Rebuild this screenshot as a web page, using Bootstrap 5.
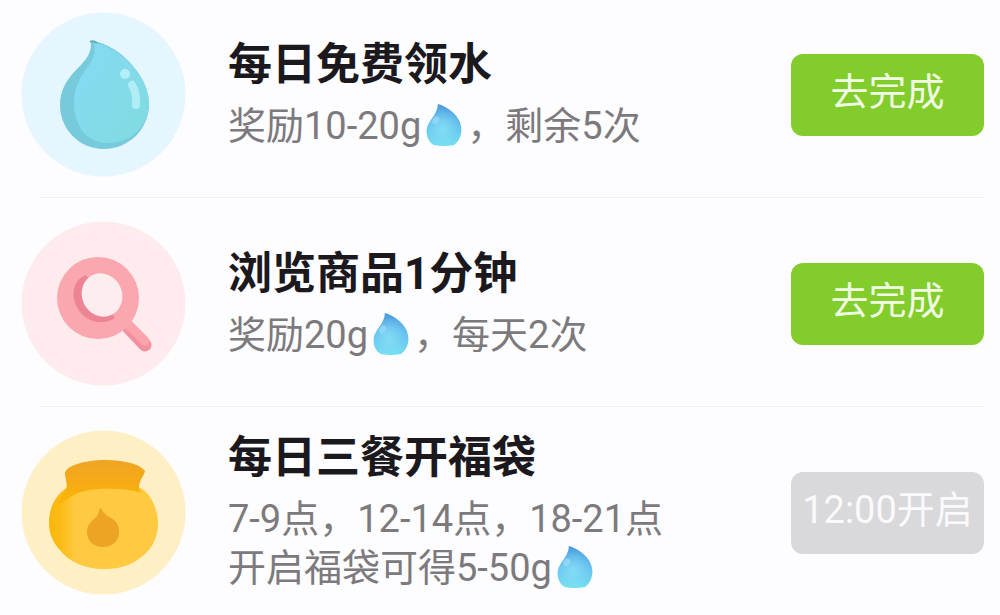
<!DOCTYPE html>
<html lang="zh-CN">
<head>
<meta charset="utf-8">
<meta name="viewport" content="width=device-width, initial-scale=1">
<title>每日任务</title>
<link href="https://cdn.jsdelivr.net/npm/bootstrap@5.3.0/dist/css/bootstrap.min.css" rel="stylesheet">
<style>
  body { background: #fdfcfe; font-family: Roboto, "Noto Sans CJK SC", sans-serif; }
  .task { padding: 23px 16px 21px 21px; }
  .task:first-child { padding-top: 12px; }
  .task:last-child { padding-top: 20px; padding-bottom: 12px; }
  .task + .task::before { content: ""; position: absolute; top: -1px; left: 40px; right: 16px; height: 1px; background: #f2eff2; }
  .task-icon { width: 165px; height: 165px; }
  .task-text { margin-left: 42px; padding-bottom: 5px; }
  .task-title { font-size: 44px; line-height: 62px; font-weight: 700; color: #1b191d; margin-bottom: 6px; }
  .task-info { font-size: 38px; line-height: 49px; color: #7c7a7d; }
  .drop { width: 38px; height: 43px; margin: 0 4px; vertical-align: -7px; }
  .btn-task { width: 193px; height: 82px; padding: 0 0 6px; border: 0; border-radius: 12px; font-size: 38px; line-height: 48px; color: #f0fde4; background: #82cc2c; }
  .btn-task:hover { color: #fff; background: #78c022; }
  .btn-task:disabled { color: #faf9fb; background: #d9d8da; opacity: 1; }
</style>
</head>
<body>
<svg width="0" height="0" class="position-absolute" aria-hidden="true">
  <defs>
    <linearGradient id="dropFill" x1="0" y1="0" x2="0" y2="1">
      <stop offset="0" stop-color="#4c9bdc"/><stop offset=".4" stop-color="#62b9ed"/><stop offset="1" stop-color="#74e0f0"/>
    </linearGradient>
    <radialGradient id="dropGlow" cx=".45" cy=".6" r=".5">
      <stop offset="0" stop-color="#83dcf6"/><stop offset="1" stop-color="#83dcf6" stop-opacity="0"/>
    </radialGradient>
    <linearGradient id="waterFill" x1="0" y1="0" x2="1" y2="1">
      <stop offset=".3" stop-color="#84daee"/><stop offset="1" stop-color="#80dcdf"/>
    </linearGradient>
    <linearGradient id="neckFill" x1="0" y1="0" x2="0" y2="1">
      <stop offset="0" stop-color="#f0a526"/><stop offset=".45" stop-color="#f5aa16"/><stop offset="1" stop-color="#fcb906"/>
    </linearGradient>
    <linearGradient id="bagFill" x1="0" y1="0" x2="1" y2="0">
      <stop offset="0" stop-color="#f9b70c"/><stop offset=".1" stop-color="#fbbb16"/><stop offset=".25" stop-color="#ffca42"/>
    </linearGradient>
    <symbol id="drop" viewBox="0 0 36 42">
      <path d="M12 1C20 3 35 12 35 26C35 33 32 38 28 41Q18 43 8 41C3 38 1 33 1 27C1 18 12 12 12 1Z" fill="url(#dropFill)"/>
      <path d="M12 1C20 3 35 12 35 26C35 33 32 38 28 41Q18 43 8 41C3 38 1 33 1 27C1 18 12 12 12 1Z" fill="url(#dropGlow)"/>
      <ellipse cx="10" cy="17" rx="3" ry="4" transform="rotate(35 10 17)" fill="#9cdcfa" opacity=".7"/>
    </symbol>
  </defs>
</svg>

<main class="d-flex flex-column">
  <section class="task position-relative d-flex align-items-center">
    <svg class="task-icon flex-shrink-0" viewBox="0 0 165 165" aria-hidden="true">
      <circle cx="82.500" cy="82.500" r="82" fill="#e6f6fe"/>
      <path d="M70 29C87 30 107 45 118 62C124 71 128 82 128 92C128 117 108 137 83 137C58 137 39 117 39 93C39 78 46 67 56 57C66 47 71 40 70 29Z" fill="#76cadb"/>
      <path d="M73 31C89 33 107 46 118 62C124 71 128 82 128 91C128 113 112 131 86 131C66 131 53 114 53 91C53 74 60 65 65 57C73 47 75 40 73 31Z" fill="url(#waterFill)"/>
      <circle cx="104" cy="62" r="5" fill="#b4eff9"/>
      <path d="M111 73Q116 81 115 93" fill="none" stroke="#b0edf5" stroke-width="8" stroke-linecap="round"/>
      <path d="M69 30Q72 28 76 31" fill="none" stroke="#62aebe" stroke-width="2"/>
    </svg>
    <div class="task-text flex-grow-1">
      <h2 class="task-title">每日免费领水</h2>
      <p class="task-info mb-0">奖励10-20g<svg class="drop" role="img" aria-label="水滴"><use href="#drop"/></svg>，剩余5次</p>
    </div>
    <button type="button" class="btn btn-task flex-shrink-0">去完成</button>
  </section>

  <section class="task position-relative d-flex align-items-center">
    <svg class="task-icon flex-shrink-0" viewBox="0 0 165 165" aria-hidden="true">
      <circle cx="82.500" cy="82.500" r="82" fill="#feebed"/>
      <path d="M107 106L124 124" stroke="#f3919f" stroke-width="13" stroke-linecap="round"/>
      <path d="M105 101L124 120" stroke="#faa4ae" stroke-width="9" stroke-linecap="round"/>
      <circle cx="77" cy="77" r="41" fill="#fba7b0"/>
      <path d="M65 54C50 60 49 78 59 91C67 101 82 105 94 97Z" fill="#ed8494"/>
      <ellipse cx="81" cy="74" rx="20" ry="22" transform="rotate(-25 81 74)" fill="#feedef"/>
    </svg>
    <div class="task-text flex-grow-1">
      <h2 class="task-title">浏览商品1分钟</h2>
      <p class="task-info mb-0">奖励20g<svg class="drop" role="img" aria-label="水滴"><use href="#drop"/></svg>，每天2次</p>
    </div>
    <button type="button" class="btn btn-task flex-shrink-0">去完成</button>
  </section>

  <section class="task position-relative d-flex align-items-center">
    <svg class="task-icon flex-shrink-0" viewBox="0 0 165 165" aria-hidden="true">
      <circle cx="82.500" cy="82.500" r="82" fill="#feefc4"/>
      <path d="M45 58H120C130 64 137 79 137 94C137 104 133 115 126 122C115 133 103 139 83 139C62 139 47 131 38 119C32 112 28 104 28 93C28 78 34 66 45 58Z" fill="url(#bagFill)"/>
      <path d="M44 43C46 35 65 30 84 30C103 30 119 34 124 41C123 46 118 50 118 58Q118 61 121 63C102 57 66 57 53 65C44 70 41 75 35 76Q39 66 45 60C47 54 44 49 44 43Z" fill="url(#neckFill)"/>
      <path d="M79 78C82 80 83 84 88 87C92 89 98 92 98 102C98 111 91 117 82 117C73 117 66 111 66 102C66 91 75 90 77 84Q78 81 79 78Z" fill="#eda326"/>
    </svg>
    <div class="task-text flex-grow-1">
      <h2 class="task-title">每日三餐开福袋</h2>
      <p class="task-info mb-0">7-9点，12-14点，18-21点<br>开启福袋可得5-50g<svg class="drop" role="img" aria-label="水滴"><use href="#drop"/></svg></p>
    </div>
    <button type="button" class="btn btn-task flex-shrink-0" disabled>12:00开启</button>
  </section>
</main>
<script src="https://cdn.jsdelivr.net/npm/bootstrap@5.3.0/dist/js/bootstrap.bundle.min.js"></script>
</body>
</html>
